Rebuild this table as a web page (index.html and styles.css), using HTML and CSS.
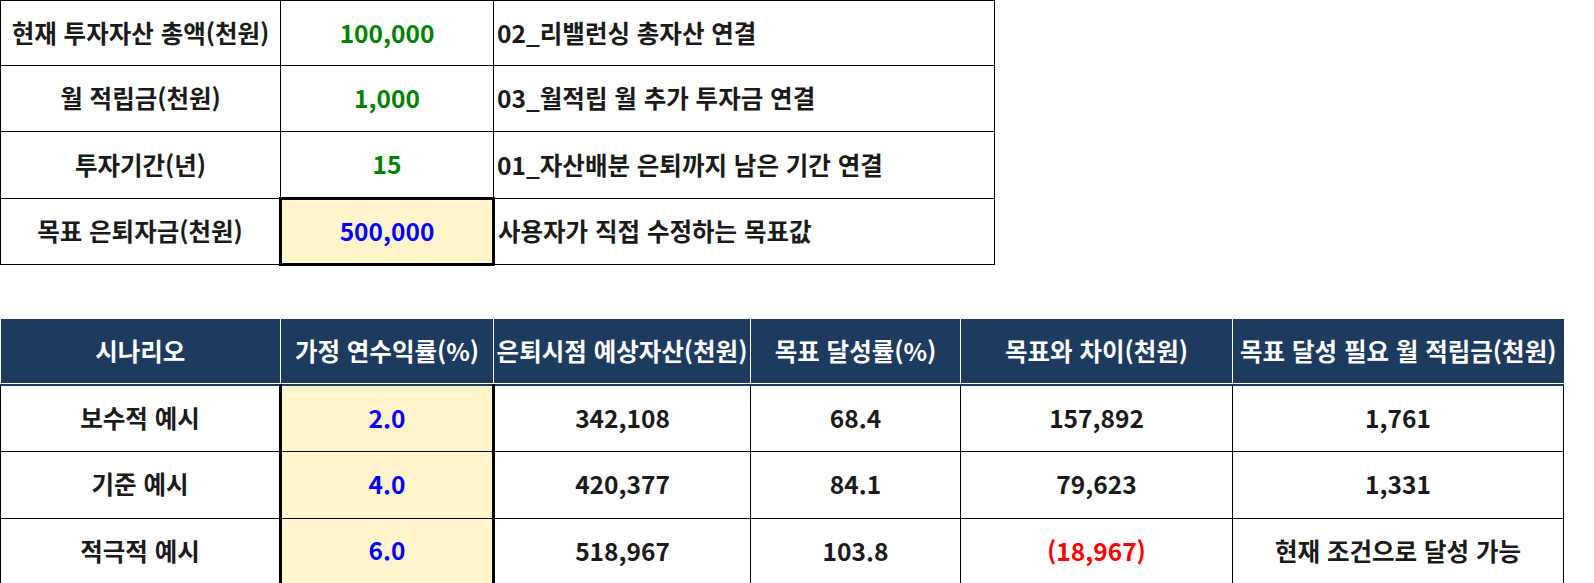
FILE: index.html
```html
<!DOCTYPE html>
<html lang="ko">
<head>
<meta charset="utf-8">
<link rel="stylesheet" href="styles.css">
</head>
<body>
<div class="page">
  <table class="grid top">
    <colgroup><col class="c1"><col class="c2"><col class="c3"></colgroup>
    <tr class="r1"><td class="lbl">현재 투자자산 총액(천원)</td><td class="val green">100,000</td><td class="note">02_리밸런싱 총자산 연결</td></tr>
    <tr class="r2"><td class="lbl">월 적립금(천원)</td><td class="val green">1,000</td><td class="note">03_월적립 월 추가 투자금 연결</td></tr>
    <tr class="r3"><td class="lbl">투자기간(년)</td><td class="val green">15</td><td class="note">01_자산배분 은퇴까지 남은 기간 연결</td></tr>
    <tr class="r4"><td class="lbl">목표 은퇴자금(천원)</td><td class="val blue input single">500,000</td><td class="note">사용자가 직접 수정하는 목표값</td></tr>
  </table>

  <table class="grid bottom">
    <colgroup><col class="b1"><col class="b2"><col class="b3"><col class="b4"><col class="b5"><col class="b6"></colgroup>
    <tr class="head"><th>시나리오</th><th>가정 연수익률(%)</th><th>은퇴시점 예상자산(천원)</th><th>목표 달성률(%)</th><th>목표와 차이(천원)</th><th>목표 달성 필요 월 적립금(천원)</th></tr>
    <tr class="row ra"><td>보수적 예시</td><td class="blue input first">2.0</td><td>342,108</td><td>68.4</td><td>157,892</td><td>1,761</td></tr>
    <tr class="row rb"><td>기준 예시</td><td class="blue input mid">4.0</td><td>420,377</td><td>84.1</td><td>79,623</td><td>1,331</td></tr>
    <tr class="row rc"><td>적극적 예시</td><td class="blue input last">6.0</td><td>518,967</td><td>103.8</td><td class="red">(18,967)</td><td>현재 조건으로 달성 가능</td></tr>
  </table>
</div>
</body>
</html>
```

FILE: styles.css
```css
html, body {
  margin: 0;
  padding: 0;
  background: #ffffff;
}
body {
  font-family: "Noto Sans CJK KR", "Noto Sans", sans-serif;
  font-weight: 700;
  font-size: 24.5px;
  color: #1a1a1a;
}
.page {
  display: flex;
  flex-direction: column;
  align-items: flex-start;
  gap: 53px;
}
.grid {
  border-collapse: collapse;
  table-layout: fixed;
}
.grid td, .grid th {
  border: 1px solid #000;
  padding: 0;
  text-align: center;
  vertical-align: middle;
  white-space: nowrap;
  overflow: hidden;
  line-height: 1;
}
.top { width: 994px; }
.c1 { width: 280px; }
.c2 { width: 213px; }
.c3 { width: 501px; }
.top tr { height: 66px; }
.top tr.r1 { height: 65px; }
.top tr.r3 { height: 67px; }
.top td.note {
  text-align: left;
  padding-left: 3px;
}
.green { color: #008000; }
.blue { color: #0000ff; }
.red { color: #ff0000; }
.input { background: #fff5cc; }
.grid td.single { border: 3px solid #000; }

.bottom { width: 1563px; }
.b1 { width: 280px; }
.b2 { width: 213px; }
.b3 { width: 257px; }
.b4 { width: 210px; }
.b5 { width: 272px; }
.b6 { width: 331px; }
.bottom tr.head { height: 66px; }
.bottom th {
  background: #1d3a5f;
  color: #ffffff;
  font-weight: 700;
  border: 1px solid #ffffff;
  border-top: 0;
  border-bottom: 2px solid #1d3a5f;
  box-shadow: inset 0 -1px 0 #ffffff;
}
.bottom th:first-child { border-left: 0; }
.bottom th:last-child { border-right: 0; }
.bottom tr.ra { height: 66px; }
.bottom tr.rb { height: 67px; }
.bottom tr.rc { height: 66px; }
.grid td.first { border-left: 3px solid #000; border-right: 3px solid #000; }
.grid td.mid { border-left: 3px solid #000; border-right: 3px solid #000; }
.grid td.last { border-left: 3px solid #000; border-right: 3px solid #000; border-bottom: 3px solid #000; }
```
